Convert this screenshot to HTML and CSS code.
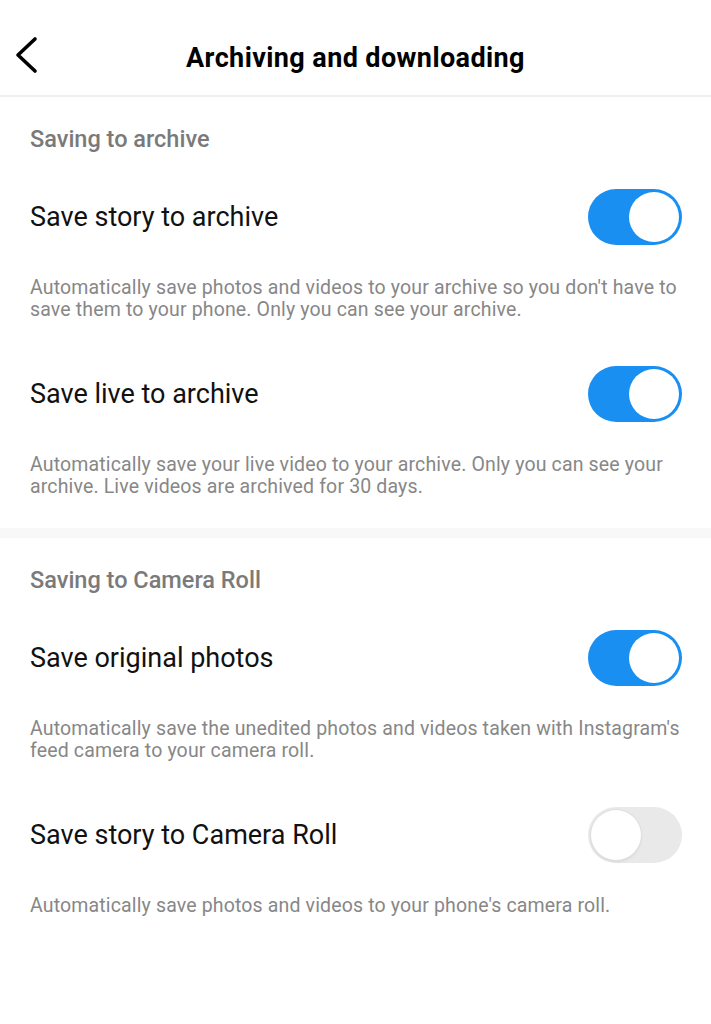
FILE: index.html
```html
<!DOCTYPE html>
<html lang="en">
<head>
    <meta charset="UTF-8">
    <meta name="viewport" content="width=device-width, initial-scale=1.0">
    <title>Archiving and downloading</title>
    <link rel="stylesheet" href="styles.css">
</head>
<body>
    <header class="topbar">
        <div class="back">
            <svg width="26" height="40" viewBox="0 0 26 40">
                <path d="M22 4 L5 20 L22 36" fill="none" stroke="#000" stroke-width="3.6" stroke-linecap="round" stroke-linejoin="round"/>
            </svg>
        </div>
        <h1 class="topbar-title">Archiving and downloading</h1>
    </header>

    <section class="section">
        <div class="section-title">Saving to archive</div>

        <div class="setting">
            <div class="setting-row">
                <span class="setting-label">Save story to archive</span>
                <div class="toggle on"><div class="knob"></div></div>
            </div>
            <p class="setting-desc">Automatically save photos and videos to your archive so you don't have to save them to your phone. Only you can see your archive.</p>
        </div>

        <div class="setting">
            <div class="setting-row">
                <span class="setting-label">Save live to archive</span>
                <div class="toggle on"><div class="knob"></div></div>
            </div>
            <p class="setting-desc">Automatically save your live video to your archive. Only you can see your archive. Live videos are archived for 30 days.</p>
        </div>
    </section>

    <div class="divider"></div>

    <section class="section">
        <div class="section-title">Saving to Camera Roll</div>

        <div class="setting">
            <div class="setting-row">
                <span class="setting-label">Save original photos</span>
                <div class="toggle on"><div class="knob"></div></div>
            </div>
            <p class="setting-desc">Automatically save the unedited photos and videos taken with Instagram's feed camera to your camera roll.</p>
        </div>

        <div class="setting">
            <div class="setting-row">
                <span class="setting-label">Save story to Camera Roll</span>
                <div class="toggle"><div class="knob"></div></div>
            </div>
            <p class="setting-desc">Automatically save photos and videos to your phone's camera roll.</p>
        </div>
    </section>
</body>
</html>
```
FILE: styles.css
```css
body {
    margin: 0;
    background: #ffffff;
    font-family: Roboto, "Liberation Sans", Arial, sans-serif;
    color: #111;
}

.topbar {
    position: relative;
    height: 95px;
    display: flex;
    align-items: center;
    justify-content: center;
    border-bottom: 2px solid #f0f0f0;
}

.back {
    position: absolute;
    left: 13px;
    top: 35px;
}

.back svg {
    display: block;
}

.topbar-title {
    margin: 0;
    font-size: 27px;
    line-height: 32px;
    font-weight: 700;
    letter-spacing: 0.4px;
    color: #000;
    padding-top: 20px;
}

.section {
    padding: 28px 30px 30px;
}

.section-title {
    font-size: 23.5px;
    line-height: 28px;
    font-weight: 500;
    color: #7a7a7a;
    margin-bottom: 36px;
}

.setting + .setting {
    margin-top: 45px;
}

.setting-row {
    display: flex;
    align-items: center;
    justify-content: space-between;
    height: 56px;
}

.setting-label {
    font-size: 27px;
    color: #111;
}

.setting-desc {
    margin: 32px -8px 0 0;
    font-size: 19.5px;
    line-height: 22px;
    letter-spacing: 0.15px;
    color: #878787;
}

.toggle {
    width: 94px;
    height: 56px;
    border-radius: 28px;
    background: #e9e9e9;
    box-sizing: border-box;
    padding: 3px;
    display: flex;
    margin-right: -1px;
}

.toggle .knob {
    width: 50px;
    height: 50px;
    border-radius: 50%;
    background: #fff;
    box-shadow: 0 0 0 1px #dedede, 0 2px 3px rgba(0, 0, 0, 0.08);
}

.toggle.on {
    background: #1a8ff2;
    justify-content: flex-end;
}

.toggle.on .knob {
    box-shadow: none;
}

.divider {
    height: 10px;
    background: #f8f8f8;
}
```
